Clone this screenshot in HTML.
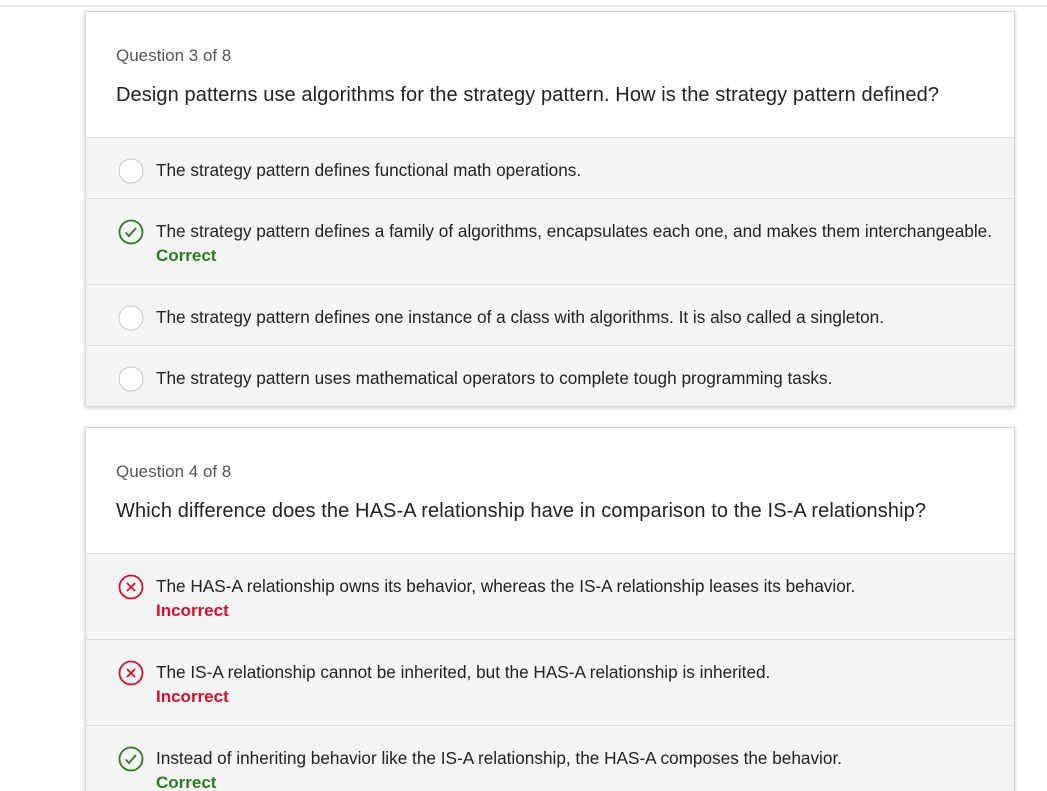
<!DOCTYPE html>
<html style="overflow:hidden;height:791px"><head><style>
body{margin:0;background:#fff;font-family:"Liberation Sans",sans-serif;width:1047px;height:791px;overflow:hidden;position:relative}
.topline{position:absolute;top:5px;left:0;width:1047px;height:2px;background:#e6e6e6}
.card{position:absolute;left:85px;width:928px;background:#fff;border:1px solid #d6d6d6;box-shadow:0 1px 4px rgba(0,0,0,.2)}
.hdr{height:125px;position:relative;border-bottom:1px solid #dcdcdc}
.qn{position:absolute;left:30px;top:34px;font-size:17px;color:#555}
.qt{position:absolute;left:30px;top:72px;font-size:20px;color:#222;letter-spacing:0.1px}
.row{position:relative;background:#f4f4f4;border-bottom:1px solid #dcdcdc;box-sizing:border-box}
.row .t{position:absolute;left:70px;top:22px;font-size:17.2px;color:#222;white-space:nowrap}
.row .s{position:absolute;left:70px;top:47px;font-size:17px;font-weight:bold}
.row svg{position:absolute;left:32px;top:20px}
.g{color:#2a7d1e}.r{color:#d0112b}
</style></head><body>
<div class="topline"></div>
<div class="card" style="top:11px;height:394px;overflow:hidden">
<div class="hdr"><div class="qn">Question 3 of 8</div><div class="qt">Design patterns use algorithms for the strategy pattern. How is the strategy pattern defined?</div></div>
<div class="row" style="height:61px"><svg width="26" height="26"><circle cx="13" cy="13" r="12" fill="#fff" stroke="#c8c8c8" stroke-width="1"/></svg><div class="t">The strategy pattern defines functional math operations.</div></div>
<div class="row" style="height:86px"><svg width="26" height="26"><circle cx="13" cy="13" r="11.5" fill="none" stroke="#2a7d1e" stroke-width="1.8"/><path d="M7.5 13.5l3.5 3.5 7-8" fill="none" stroke="#2a7d1e" stroke-width="1.8"/></svg><div class="t">The strategy pattern defines a family of algorithms, encapsulates each one, and makes them interchangeable.</div><div class="s g">Correct</div></div>
<div class="row" style="height:61px"><svg width="26" height="26"><circle cx="13" cy="13" r="12" fill="#fff" stroke="#c8c8c8" stroke-width="1"/></svg><div class="t">The strategy pattern defines one instance of a class with algorithms. It is also called a singleton.</div></div>
<div class="row" style="height:61px;border-bottom:none"><svg width="26" height="26"><circle cx="13" cy="13" r="12" fill="#fff" stroke="#c8c8c8" stroke-width="1"/></svg><div class="t">The strategy pattern uses mathematical operators to complete tough programming tasks.</div></div>
</div>
<div class="card" style="top:427px;height:400px">
<div class="hdr"><div class="qn">Question 4 of 8</div><div class="qt">Which difference does the HAS-A relationship have in comparison to the IS-A relationship?</div></div>
<div class="row" style="height:86px"><svg width="26" height="26"><circle cx="13" cy="13" r="11.5" fill="none" stroke="#d0112b" stroke-width="1.8"/><path d="M9 9l8 8M17 9l-8 8" stroke="#d0112b" stroke-width="1.8"/></svg><div class="t">The HAS-A relationship owns its behavior, whereas the IS-A relationship leases its behavior.</div><div class="s r">Incorrect</div></div>
<div class="row" style="height:86px"><svg width="26" height="26"><circle cx="13" cy="13" r="11.5" fill="none" stroke="#d0112b" stroke-width="1.8"/><path d="M9 9l8 8M17 9l-8 8" stroke="#d0112b" stroke-width="1.8"/></svg><div class="t">The IS-A relationship cannot be inherited, but the HAS-A relationship is inherited.</div><div class="s r">Incorrect</div></div>
<div class="row" style="height:86px"><svg width="26" height="26"><circle cx="13" cy="13" r="11.5" fill="none" stroke="#2a7d1e" stroke-width="1.8"/><path d="M7.5 13.5l3.5 3.5 7-8" fill="none" stroke="#2a7d1e" stroke-width="1.8"/></svg><div class="t">Instead of inheriting behavior like the IS-A relationship, the HAS-A composes the behavior.</div><div class="s g">Correct</div></div>
</div>
</body></html>
